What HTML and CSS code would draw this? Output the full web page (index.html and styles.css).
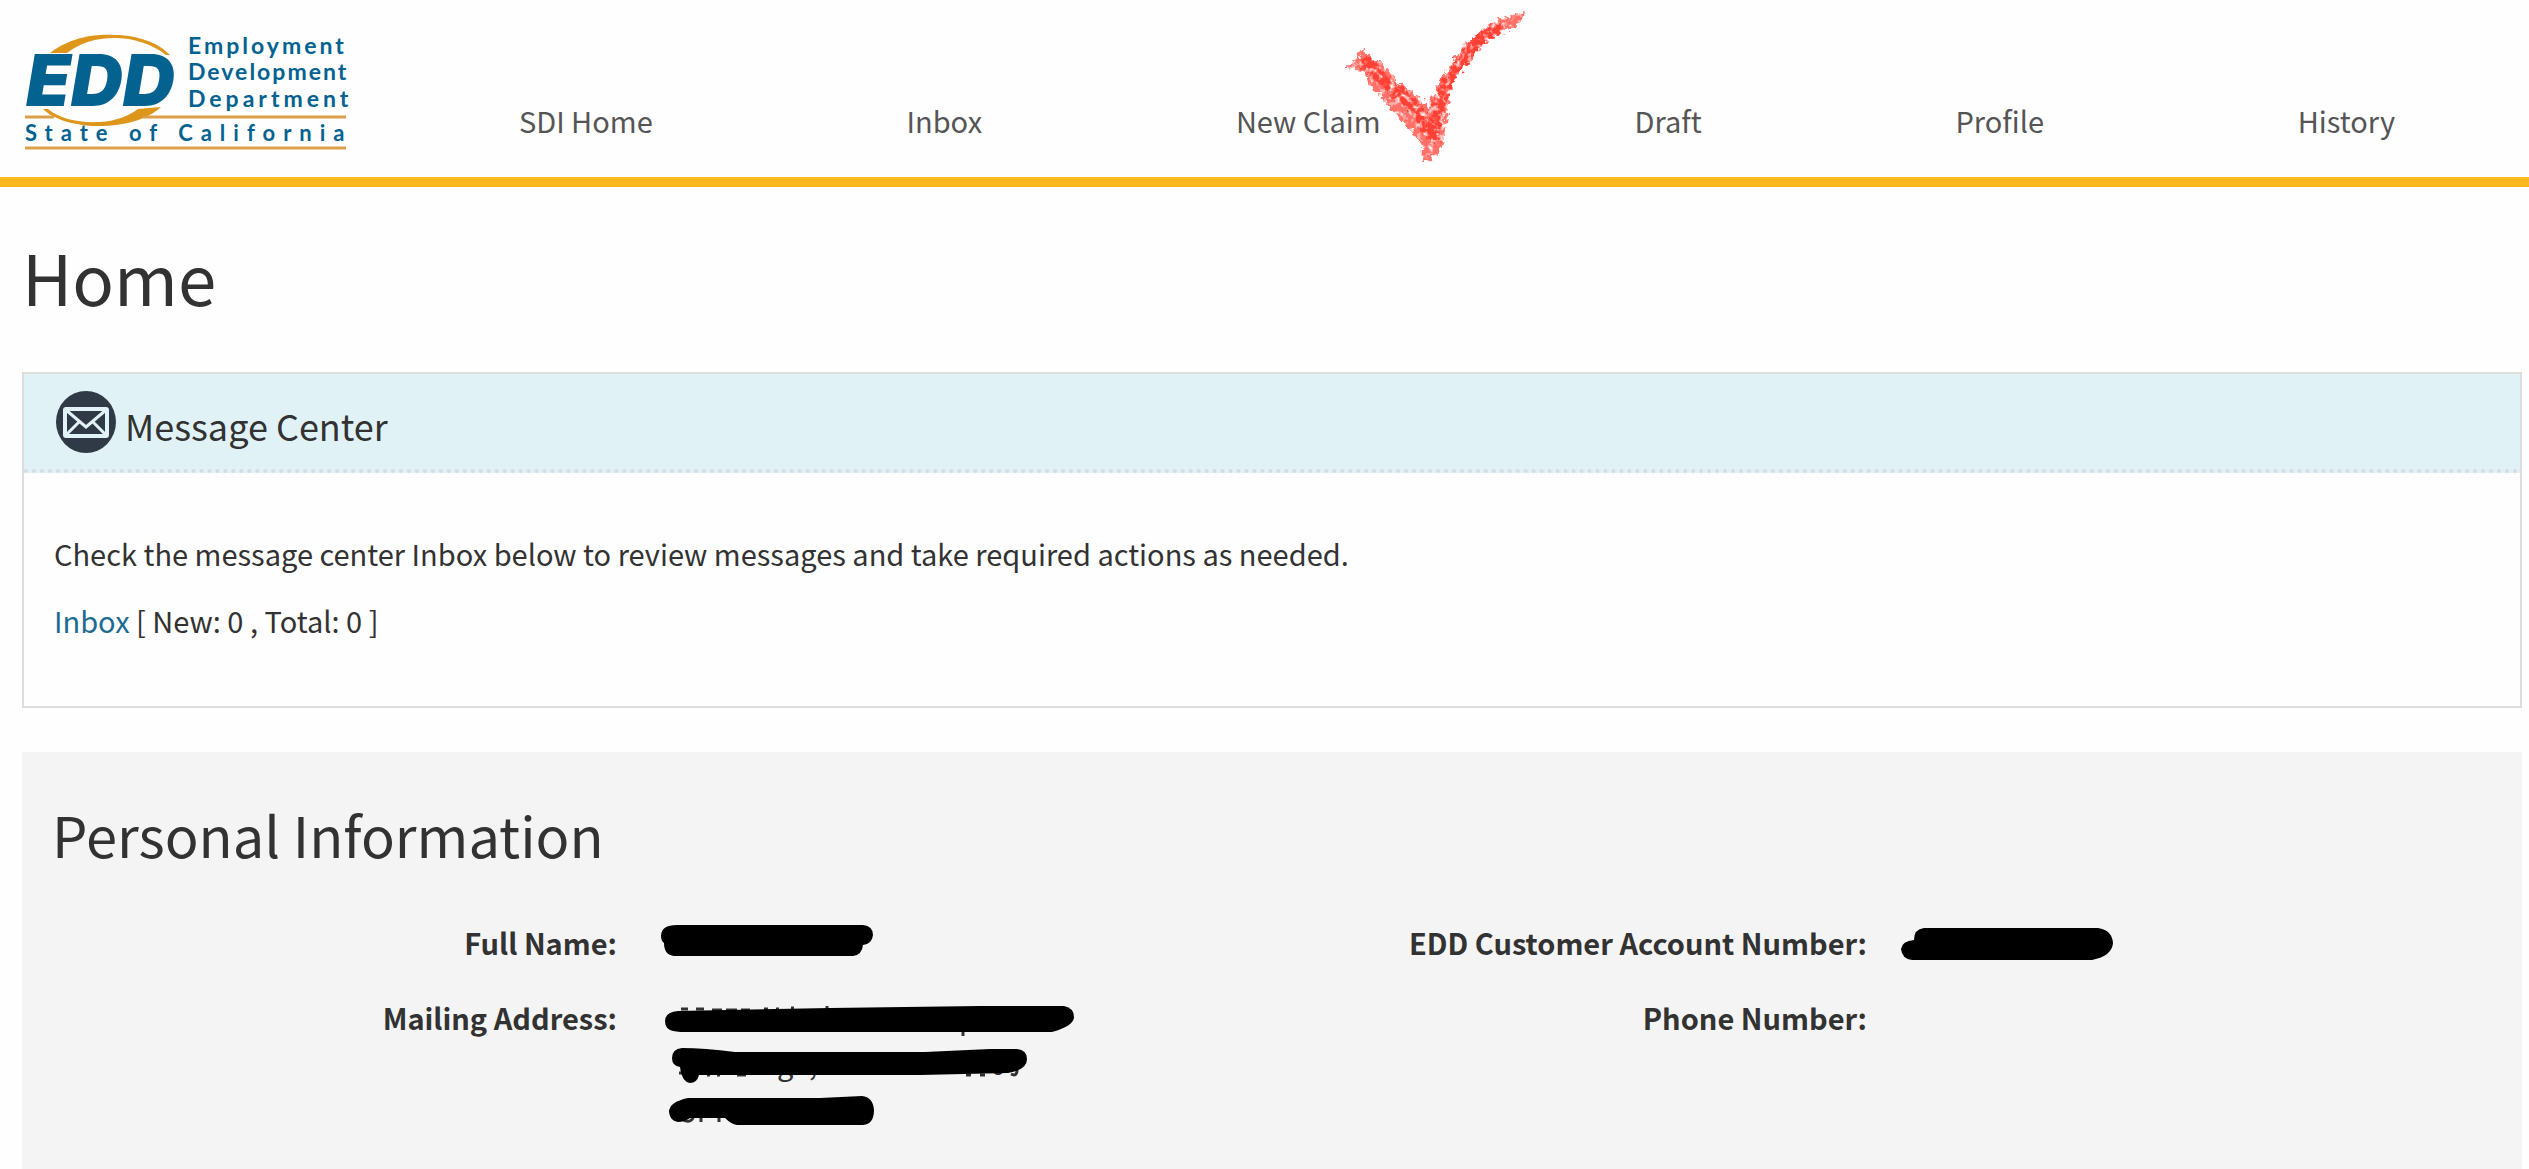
FILE: index.html
```
<!DOCTYPE html>
<html lang="en">
<head>
    <meta charset="UTF-8">
    <meta name="viewport" content="width=device-width, initial-scale=1.0">
    <title>SDI Online - Home</title>
    <link rel="stylesheet" href="styles.css">
</head>
<body>
    <header class="site-header">
        <a href="#" class="logo">
            <svg width="330" height="120" viewBox="22 30 330 120" role="img" aria-label="EDD">
                <!-- swooshes -->
                <path class="swoosh" d="M50 53 C72 36 98 34 114 35 C136 35 158 42 170 55 L166 55 C152 44 134 38 114 38 C96 38 80 43 67 53 Z"/>
                <path class="swoosh" d="M43 109 L48 109 C60 119 78 123 100 122 C117 121 130 115 138 109 L161 107 C148 119 126 126 98 126 C72 126 52 118 43 109 Z"/>
                <path class="rule" d="M25 117 H54 M143 117 H346 M25 148 H346"/>
                <text class="logo-edd" x="26" y="106">EDD</text>
                <text class="logo-name" x="188" y="54">Employment</text>
                <text class="logo-name logo-name-dev" x="188" y="80">Development</text>
                <text class="logo-name logo-name-dep" x="188" y="107">Department</text>
                <text class="logo-state" x="25" y="141">State of California</text>
            </svg>
        </a>
        <nav class="main-nav">
            <ul>
                <li><a href="#">SDI Home</a></li>
                <li><a href="#">Inbox</a></li>
                <li class="marked">
                    <a href="#">New Claim</a>
                    <svg class="check" width="200" height="170" viewBox="400 0 600 510" aria-hidden="true">
                        <filter id="crayon" x="-10%" y="-10%" width="120%" height="120%">
                            <feTurbulence type="fractalNoise" baseFrequency="0.06" numOctaves="3" seed="4" result="noise"/>
                            <feDisplacementMap in="SourceGraphic" in2="noise" scale="34" xChannelSelector="R" yChannelSelector="G" result="rough"/>
                            <feColorMatrix in="noise" type="matrix" values="0 0 0 0 0  0 0 0 0 0  0 0 0 0 0  0 0 0 -3 2.5" result="grain"/>
                            <feComposite in="rough" in2="grain" operator="in"/>
                            <feGaussianBlur stdDeviation="2"/>
                        </filter>
                        <g filter="url(#crayon)">
                            <path fill="#ff4136" opacity="0.75" d="M436 203 L488 153 L525 175 L600 250 L650 290 L686 325 L700 285 L735 215 L780 145 L850 85 L915 50 L975 36 L950 75 L890 108 L835 140 L790 195 L755 250 L742 310 L735 380 L722 440 L690 480 L664 484 L668 440 L640 400 L585 345 L540 292 L512 262 L490 215 Z"/>
                            <path fill="none" stroke="#ff4136" stroke-width="34" stroke-linecap="round" stroke-linejoin="round" d="M495 185 L560 250 L635 310 L700 415 L718 300 L760 215 L830 125 L895 82"/>
                        </g>
                    </svg>
                </li>
                <li><a href="#">Draft</a></li>
                <li><a href="#">Profile</a></li>
                <li><a href="#">History</a></li>
            </ul>
        </nav>
    </header>

    <main class="content">
        <h1>Home</h1>

        <section class="message-center">
            <div class="panel-head">
                <svg class="mail-icon" width="60" height="62" viewBox="0 0 60 62" aria-hidden="true">
                    <ellipse cx="30" cy="31" rx="30" ry="31" fill="#303946"/>
                    <rect x="9" y="18" width="42" height="27" rx="1" fill="none" stroke="#e1f3f8" stroke-width="4"/>
                    <path d="M10 19 L30 36 L50 19 M10 44 L23 31 M50 44 L37 31" fill="none" stroke="#e1f3f8" stroke-width="3"/>
                </svg>
                <h2>Message Center</h2>
            </div>
            <div class="panel-body">
                <p>Check the message center Inbox below to review messages and take required actions as needed.</p>
                <p><a href="#">Inbox</a> [ New: 0 , Total: 0 ]</p>
            </div>
        </section>

        <section class="personal-info">
            <h2>Personal Information</h2>
            <dl class="info-grid">
                <dt>Full Name:</dt>
                <dd>
                    <svg class="redacted" width="220" height="40" viewBox="657 920 220 40" aria-hidden="true">
                        <path d="M661 936 Q661 925 677 925 H863 Q873 926 873 935 Q872 944 863 945 Q862 955 853 956 H674 Q664 955 664 943 Q661 941 661 936 Z"/>
                    </svg>
                </dd>
                <dt>EDD Customer Account Number:</dt>
                <dd>
                    <svg class="redacted" width="220" height="45" viewBox="1907 920 220 45" aria-hidden="true">
                        <path d="M1901 949 Q1902 941 1914 940 Q1914 929 1924 928 H2098 Q2112 930 2113 943 Q2112 956 2092 960 H1912 Q1902 959 1901 949 Z"/>
                    </svg>
                </dd>
                <dt>Mailing Address:</dt>
                <dd class="address">
                    <svg class="redacted" width="430" height="135" viewBox="657 995 430 135" aria-hidden="true">
                        <path class="trace" d="M681 1009 H688 M696 1009 H704 M712 1010 H722 M726 1010 H737 M741 1010 H750 M764 1009 H768 M776 1009 H779 M791 1008 H794 M827 1006 V1010 M963 1030 V1036"/>
                        <path class="trace" d="M679 1073 H684 M707 1075 H710 M717 1075 H720 M737 1075 H746 M966 1075 H971 M980 1075 H985 M1011 1074 Q1017 1077 1017 1070"/>
                        <path class="trace" d="M683 1120 Q692 1124 694 1115 M701 1117 V1122 M719 1117 V1122"/>
                        <text x="777" y="1075">g</text>
                        <text x="809" y="1075">,</text>
                        <text x="990" y="1075">0</text>
                        <path d="M665 1021 Q665 1012 678 1011 L830 1008 L980 1006 H1064 Q1074 1008 1074 1017 Q1074 1026 1052 1032 H680 L673 1031 Q665 1029 665 1021 Z"/>
                        <path d="M672 1058 Q672 1049 682 1048 Q704 1048 735 1052 H925 L990 1049 H1017 Q1027 1050 1027 1059 Q1027 1070 1008 1073 L920 1075 H699 Q697 1083 690 1083 Q682 1082 680 1067 Q672 1066 672 1058 Z"/>
                        <path d="M669 1112 Q669 1102 688 1098 H820 L862 1096 Q873 1097 874 1110 Q874 1124 863 1125 H737 Q731 1124 725 1118 H690 Q684 1122 678 1122 Q670 1121 669 1112 Z"/>
                    </svg>
                </dd>
                <dt>Phone Number:</dt>
                <dd></dd>
            </dl>
        </section>
    </main>
</body>
</html>
```
FILE: styles.css
```
* {
    box-sizing: border-box;
}

body {
    margin: 0;
    background: #fefefe;
    color: #323232;
    font-family: "Noto Sans CJK SC", "Noto Sans", sans-serif;
    font-size: 29px;
    line-height: 45px;
}

h1,
h2,
p,
ul,
dl,
dd {
    margin: 0;
}

/* Header */
.site-header {
    display: flex;
    align-items: flex-end;
    padding: 30px 7px 27px 22px;
    border-bottom: 10px solid #fdb71e;
}

.logo svg {
    display: block;
}

.logo text {
    fill: #046290;
}

.swoosh {
    fill: #dd961a;
}

.rule {
    fill: none;
    stroke: #dba047;
    stroke-width: 3;
}

.logo-edd {
    font-family: Inter, "Liberation Sans", sans-serif;
    font-size: 72px;
    font-style: italic;
    font-weight: 900;
}

.logo-name {
    font-family: Lato, sans-serif;
    font-size: 23px;
    font-weight: 700;
    letter-spacing: 3px;
}

.logo-name-dev {
    letter-spacing: 2px;
}

.logo-name-dep {
    letter-spacing: 4px;
}

.logo-state {
    font-family: Lato, sans-serif;
    font-size: 22px;
    font-weight: 700;
    letter-spacing: 8px;
}

.main-nav {
    flex: 1;
    margin: 0 0 7px 40px;
}

.main-nav ul {
    display: flex;
    justify-content: space-around;
    padding: 0;
    list-style: none;
}

.main-nav a {
    color: #555;
    text-decoration: none;
}

.marked {
    position: relative;
}

.check {
    position: absolute;
    right: -153px;
    bottom: -27px;
    pointer-events: none;
}

/* Content */
.content {
    padding: 0 7px 0 22px;
}

h1 {
    margin: 44px 0 51px;
    font-size: 69px;
    font-weight: 400;
    line-height: 90px;
}

.message-center {
    border: 2px solid #ddd;
}

.panel-head {
    display: flex;
    align-items: flex-end;
    gap: 9px;
    padding: 17px 32px 16px;
    background: #e1f2f7;
    border-bottom: 4px dotted #d6dde0;
}

.panel-head h2 {
    font-size: 36px;
    font-weight: 400;
    line-height: 56px;
}

.panel-body {
    padding: 58px 30px 63px;
}

.panel-body p + p {
    margin-top: 22px;
}

.panel-body a {
    color: #1c6a91;
    text-decoration: none;
}

/* Personal information */
.personal-info {
    margin-top: 44px;
    padding: 48px 0;
    background: #f4f4f4;
}

.personal-info h2 {
    margin: 0 30px 52px;
    font-size: 56px;
    font-weight: 400;
    line-height: 68px;
}

.info-grid {
    display: grid;
    grid-template-columns: repeat(4, 1fr);
    row-gap: 30px;
}

.info-grid dt {
    padding-right: 30px;
    font-weight: 700;
    text-align: right;
}

.info-grid dd {
    position: relative;
    padding-left: 30px;
}

.address {
    min-height: 135px;
}

.redacted {
    position: absolute;
    top: 0;
    left: 10px;
    overflow: visible;
}

.redacted text {
    fill: #323232;
}

.trace {
    fill: none;
    stroke: #323232;
    stroke-width: 3;
}
```
